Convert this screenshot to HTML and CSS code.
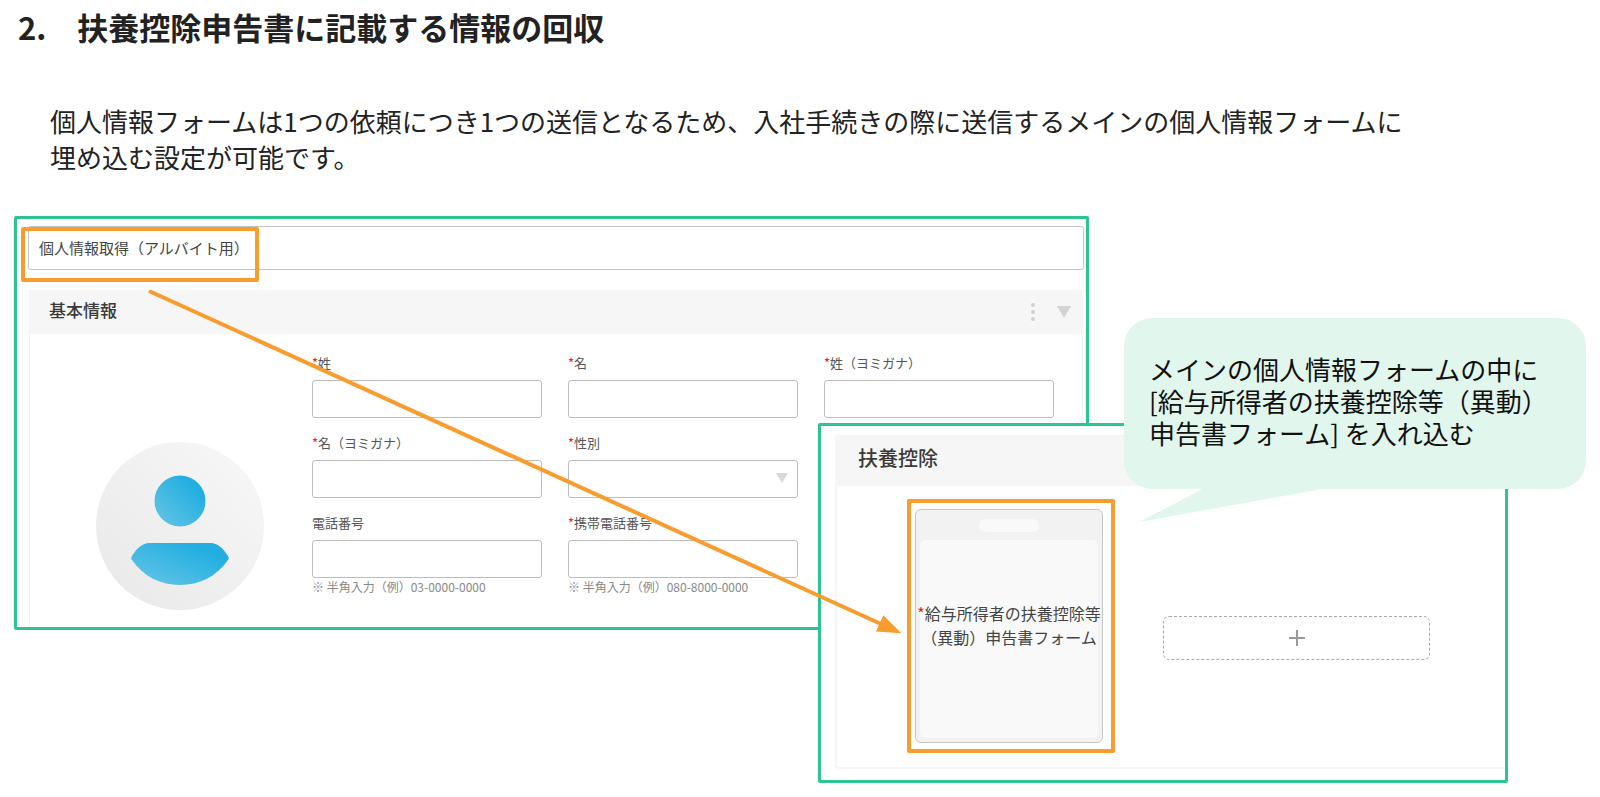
FILE: index.html
```html
<!DOCTYPE html>
<html lang="ja">
<head>
  <meta charset="UTF-8" />
  <meta name="viewport" content="width=device-width, initial-scale=1.0" />
  <title>扶養控除申告書に記載する情報の回収</title>
  <link rel="stylesheet" href="styles.css">
</head>
<body>
  <h1 class="title">2.　扶養控除申告書に記載する情報の回収</h1>
  <p class="lead">個人情報フォームは1つの依頼につき1つの送信となるため、入社手続きの際に送信するメインの個人情報フォームに<br>埋め込む設定が可能です。</p>

  <main class="stage">
    <section class="panel main-form">
      <div class="form-name">
        <input type="text" class="form-name-input" aria-label="フォーム名" value="個人情報取得（アルバイト用）" />
        <span class="mark"></span>
      </div>

      <div class="section">
        <div class="section-head">
          <h2>基本情報</h2>
          <div class="section-icons">
            <svg width="4" height="18" viewBox="0 0 4 18" fill="#cfcfcf"><circle cx="2" cy="2" r="2"/><circle cx="2" cy="9" r="2"/><circle cx="2" cy="16" r="2"/></svg>
            <svg width="14" height="12" viewBox="0 0 14 12" fill="#d3d3d3"><path d="M0 0h14L7 12z"/></svg>
          </div>
        </div>
        <div class="section-body">
          <svg class="avatar" viewBox="0 0 168 168">
            <defs>
              <linearGradient id="bg" x1="0" y1="1" x2="1" y2="0">
                <stop offset="0" stop-color="#e8e8e8"/>
                <stop offset="1" stop-color="#f8f8f8"/>
              </linearGradient>
              <linearGradient id="blue" x1="0" y1="1" x2="1" y2="0">
                <stop offset="0.1" stop-color="#5fc3e6"/>
                <stop offset="0.8" stop-color="#22aee0"/>
              </linearGradient>
            </defs>
            <circle cx="84" cy="84" r="84" fill="url(#bg)"/>
            <circle cx="84" cy="59" r="25.5" fill="url(#blue)"/>
            <path d="M53 101h62c6 0 12 5 17 13 1 2 1 3 0 4-12 17-29 25-48 25s-36-8-48-25c-1-1-1-2 0-4 5-8 11-13 17-13z" fill="url(#blue)"/>
          </svg>
          <div class="fields">
            <div class="field">
              <label for="sei"><span class="req">*</span>姓</label>
              <input type="text" id="sei" />
            </div>
            <div class="field">
              <label for="mei"><span class="req">*</span>名</label>
              <input type="text" id="mei" />
            </div>
            <div class="field">
              <label for="sei-kana"><span class="req">*</span>姓（ヨミガナ）</label>
              <input type="text" id="sei-kana" />
            </div>
            <div class="field first">
              <label for="mei-kana"><span class="req">*</span>名（ヨミガナ）</label>
              <input type="text" id="mei-kana" />
            </div>
            <div class="field">
              <label for="gender"><span class="req">*</span>性別</label>
              <div class="select">
                <select id="gender"><option value=""></option></select>
                <svg class="caret" width="12" height="10" viewBox="0 0 12 10" fill="#d8d8d8"><path d="M0 0h12L6 10z"/></svg>
              </div>
            </div>
            <div class="field first">
              <label for="tel">電話番号</label>
              <input type="tel" id="tel" />
              <p class="hint">※ 半角入力（例）03-0000-0000</p>
            </div>
            <div class="field">
              <label for="mobile"><span class="req">*</span>携帯電話番号</label>
              <input type="tel" id="mobile" />
              <p class="hint">※ 半角入力（例）080-8000-0000</p>
            </div>
          </div>
        </div>
      </div>
    </section>

    <section class="panel sub-form">
      <div class="card">
        <h2 class="card-head">扶養控除</h2>
        <div class="card-body">
          <div class="target">
            <div class="tile">
              <div class="tile-head"><span class="pill"></span></div>
              <div class="tile-body">
                <p><span class="req">*</span>給与所得者の扶養控除等<br>（異動）申告書フォーム</p>
              </div>
            </div>
          </div>
          <button type="button" class="add" aria-label="追加">
            <svg width="16" height="16" viewBox="0 0 16 16" stroke="#999" stroke-width="2"><path d="M8 0v16M0 8h16"/></svg>
          </button>
        </div>
      </div>
    </section>

    <!-- 矢印 -->
    <svg class="arrow">
      <defs>
        <marker id="head" viewBox="0 0 24 18" markerWidth="24" markerHeight="18" refX="4" refY="9" orient="auto" markerUnits="userSpaceOnUse">
          <path d="M0 0l24 9-24 9z" fill="#f79c2e"/>
        </marker>
      </defs>
      <line x1="149" y1="75" x2="55.2%" y2="409" stroke="#f79c2e" stroke-width="4" marker-end="url(#head)"/>
    </svg>

    <div class="bubble">
      <p>メインの個人情報フォームの中に<br>[給与所得者の扶養控除等（異動）<br>申告書フォーム] を入れ込む</p>
      <svg class="tail" width="178" height="34" viewBox="0 0 178 34" fill="#e1f6ec"><path d="M62 0h116v2L0 34l62-32z"/></svg>
    </div>
  </main>
</body>
</html>
```

FILE: styles.css
```css
* {
  box-sizing: border-box;
}
body {
  margin: 0;
  padding: 5px 0 12px;
  background-color: #fff;
  color: #222;
  font-family: "Noto Sans CJK JP", sans-serif;
}
h1, h2, p {
  margin: 0;
}
input, select, button {
  font-family: inherit;
}
.title {
  padding-left: 18px;
  font-size: 31px;
  line-height: 44px;
}
.lead {
  margin: 54px 0 41px;
  padding-left: 50px;
  font-size: 26px;
  line-height: 36px;
}

/* 重なり合うパネルを同じグリッドに置く */
.stage {
  position: relative;
  display: grid;
  grid-template-columns: 14px 804fr 271fr 35fr 384fr 78fr 14px;
  grid-template-rows: 102px 105px 66px 141px 153px;
}
.panel {
  border: 3px solid #2dc58f;
  border-radius: 2px;
  background-color: #fff;
}
.main-form {
  grid-column: 2 / 4;
  grid-row: 1 / 5;
  display: flex;
  flex-direction: column;
  padding: 7px 2px 0 11px;
}
.sub-form {
  grid-column: 3 / 6;
  grid-row: 3 / 6;
  display: flex;
  padding: 9px 0 11px 14px;
}

.form-name {
  position: relative;
  margin-bottom: 20px;
}
.form-name-input {
  display: block;
  width: 100%;
  height: 44px;
  padding: 0 10px 2px;
  border: 1px solid #c4c4c4;
  border-radius: 3px;
  color: #444;
  font-size: 15px;
}
.mark {
  position: absolute;
  top: 1px;
  left: -7px;
  width: 238px;
  height: 55px;
  border: 4px solid #f79c2e;
  border-radius: 2px;
}

.section {
  flex: 1;
  display: flex;
  flex-direction: column;
  margin: 0 1px;
  border: 1px solid #f2f2f2;
  border-width: 0 1px;
}
.section-head {
  display: flex;
  align-items: center;
  justify-content: space-between;
  height: 44px;
  padding: 0 11px 0 19px;
  background-color: #f6f6f6;
}
.section-head h2 {
  padding-bottom: 5px;
  color: #3a3a3a;
  font-size: 17px;
  font-weight: 500;
  line-height: 24px;
}
.section-icons {
  display: flex;
  align-items: center;
  gap: 22px;
}
.section-body {
  display: flex;
  padding: 19px 28px 0 66px;
}
.avatar {
  flex: none;
  width: 168px;
  height: 168px;
  margin: 89px 48px 0 0;
}
.fields {
  flex: 1;
  display: grid;
  grid-template-columns: repeat(3, 1fr);
  gap: 15px 26px;
  align-content: start;
}
.field {
  display: flex;
  flex-direction: column;
}
.first {
  grid-column: 1;
}
.field label {
  margin-bottom: 7px;
  color: #555;
  font-size: 13px;
  line-height: 20px;
}
.field input, .field select {
  width: 100%;
  height: 38px;
  padding: 0 10px;
  border: 1px solid #bdbdbd;
  border-radius: 3px;
  background-color: #fff;
  font-size: 13px;
}
.select {
  position: relative;
  display: flex;
}
.select select {
  appearance: none;
}
.caret {
  position: absolute;
  top: 13px;
  right: 10px;
  pointer-events: none;
}
.hint {
  color: #888;
  font-size: 12px;
  line-height: 18px;
}
.req {
  color: #d9232e;
}

.card {
  flex: 1;
  display: flex;
  flex-direction: column;
  border: 2px solid #f6f6f6;
  border-width: 0 0 2px 2px;
  border-radius: 4px 0 0 4px;
}
.card-head {
  height: 51px;
  padding-left: 21px;
  background-color: #f6f6f6;
  color: #3a3a3a;
  font-size: 20px;
  font-weight: 500;
  line-height: 46px;
}
.card-body {
  flex: 1;
  display: flex;
  gap: 48px;
  padding: 13px 75px 14px 70px;
}
.target {
  flex: none;
  display: flex;
  width: 208px;
  padding: 6px 8px 6px 4px;
  border: 4px solid #f79c2e;
  border-radius: 2px;
}
.tile {
  flex: 1;
  display: flex;
  flex-direction: column;
  min-width: 0;
  border: 1px solid #c6c6c6;
  border-radius: 6px;
  background-color: #f2f2f2;
}
.tile-head {
  display: flex;
  align-items: center;
  justify-content: center;
  height: 30px;
}
.pill {
  width: 60px;
  height: 13px;
  border-radius: 6px;
  background-color: #f9f9f9;
}
.tile-body {
  flex: 1;
  display: flex;
  align-items: center;
  justify-content: center;
  margin: 0 4px 4px;
  padding-bottom: 28px;
  border-radius: 6px;
  background-color: #f9f9f9;
  color: #444;
  font-size: 16px;
  line-height: 24px;
  text-align: center;
  white-space: nowrap;
}
.add {
  flex: 1;
  display: flex;
  align-items: center;
  justify-content: center;
  height: 44px;
  margin-top: 117px;
  padding: 0;
  border: 1px dashed #a8a8a8;
  border-radius: 6px;
  background-color: #fff;
  cursor: pointer;
}

.arrow {
  position: absolute;
  top: 0;
  left: 0;
  width: 100%;
  height: 100%;
  pointer-events: none;
}
.bubble {
  position: relative;
  grid-column: 5 / 7;
  grid-row: 2 / 4;
  display: flex;
  align-items: center;
  padding: 0 10px 6px 25px;
  border-radius: 28px;
  background-color: #e1f6ec;
  color: #111;
  font-size: 26px;
  line-height: 32px;
  white-space: nowrap;
}
.tail {
  position: absolute;
  top: 170px;
  left: 15px;
}
```
